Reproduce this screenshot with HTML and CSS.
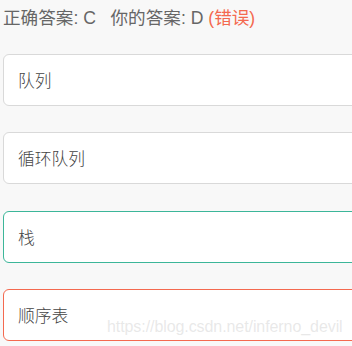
FILE: index.html
```html
<!DOCTYPE html>
<html lang="zh">
<head>
<meta charset="utf-8">
<link rel="stylesheet" href="styles.css">
</head>
<body>
<div class="page">
  <div class="result">正确答案: C&nbsp;&nbsp; 你的答案: D <span class="wrong">(错误)</span></div>
  <div class="options">
    <div class="option">队列</div>
    <div class="option">循环队列</div>
    <div class="option correct">栈</div>
    <div class="option chosen">顺序表</div>
  </div>
  <div class="watermark">https://blog.csdn.net/inferno_devil</div>
</div>
</body>
</html>
```
FILE: styles.css
```css
html, body {
  margin: 0;
  padding: 0;
  background: #f8f8f8;
  overflow: hidden;
}
.page {
  position: relative;
  width: 352px;
  height: 346px;
  overflow: hidden;
  font-family: "Liberation Sans", "Noto Sans CJK SC", sans-serif;
}
.result {
  padding: 6px 0 0 3px;
  font-size: 17.6px;
  line-height: 24px;
  color: #666;
}
.wrong {
  color: #f4694f;
}
.options {
  display: flex;
  flex-direction: column;
  gap: 26.33px;
  padding: 24px 0 0 3px;
}
.option {
  box-sizing: border-box;
  width: 370px;
  height: 52px;
  border: 1px solid #d9d9d9;
  border-radius: 6px;
  background: #fff;
  padding-left: 14px;
  display: flex;
  align-items: center;
  font-size: 16.8px;
  font-weight: 300;
  color: #444;
}
.option.correct {
  border-color: #3cb699;
}
.option.chosen {
  border-color: #f4694f;
}
.watermark {
  position: absolute;
  left: 107px;
  top: 318px;
  font-size: 16px;
  letter-spacing: -0.08px;
  color: rgba(190, 190, 190, 0.35);
  white-space: nowrap;
}
```
